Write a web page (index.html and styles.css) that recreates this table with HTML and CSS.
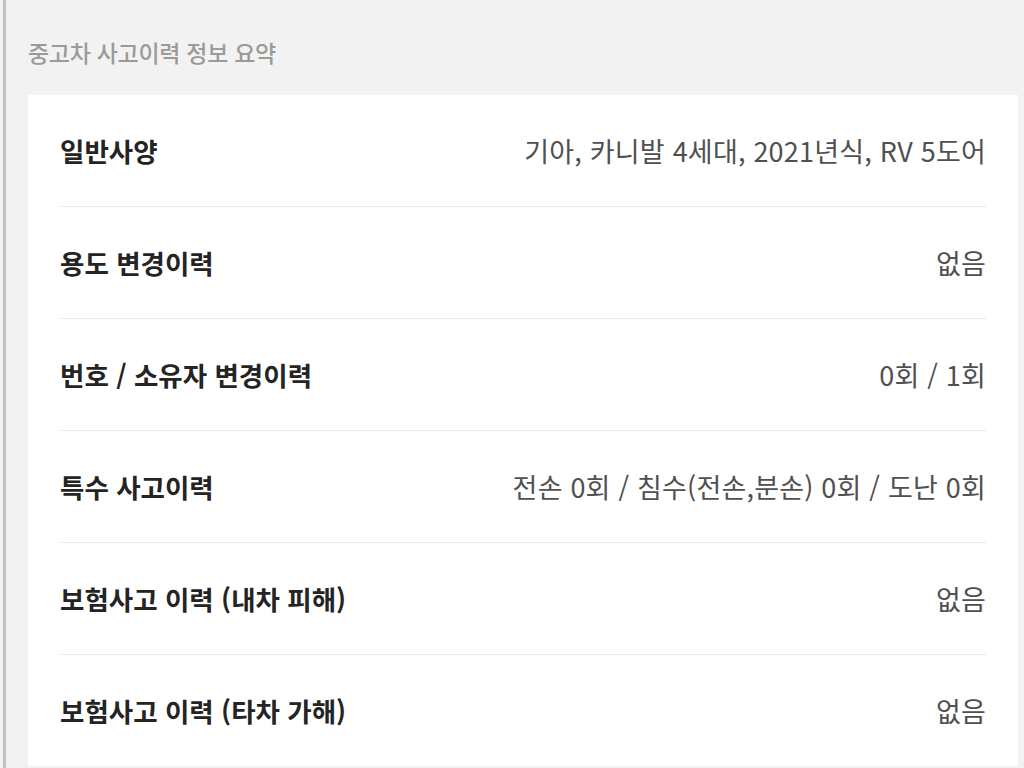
FILE: index.html
```html
<!DOCTYPE html>
<html lang="ko">
<head>
<meta charset="utf-8">
<title>중고차 사고이력 정보 요약</title>
<link rel="stylesheet" href="styles.css">
</head>
<body>
<div class="page">
  <section class="summary">
    <h2 class="summary-title">중고차 사고이력 정보 요약</h2>
    <div class="card">
      <div class="row"><span class="label">일반사양</span><span class="value">기아, 카니발 4세대, 2021년식, RV 5도어</span></div>
      <div class="row"><span class="label">용도 변경이력</span><span class="value">없음</span></div>
      <div class="row"><span class="label">번호 / 소유자 변경이력</span><span class="value">0회 / 1회</span></div>
      <div class="row"><span class="label">특수 사고이력</span><span class="value">전손 0회 / 침수(전손,분손) 0회 / 도난 0회</span></div>
      <div class="row"><span class="label">보험사고 이력 (내차 피해)</span><span class="value">없음</span></div>
      <div class="row"><span class="label">보험사고 이력 (타차 가해)</span><span class="value">없음</span></div>
    </div>
  </section>
</div>
</body>
</html>
```
FILE: styles.css
```css
html, body {
  margin: 0;
  padding: 0;
  background: #f2f2f2;
  height: 100%;
  overflow: hidden;
}
body {
  font-family: "Noto Sans CJK KR", "Noto Sans", sans-serif;
}
.page {
  margin-left: 3px;
  border-left: 3px solid #c2c2c2;
  min-height: 100%;
  padding: 0 6px 0 22px;
  box-sizing: border-box;
}
.summary {
  padding-top: 32px;
}
.summary-title {
  margin: 0;
  font-size: 23px;
  font-weight: 500;
  color: #9a9a9a;
  line-height: 40px;
  letter-spacing: -0.3px;
}
.card {
  margin-top: 23px;
  background: #ffffff;
  padding: 0 32px;
}
.row {
  display: flex;
  justify-content: space-between;
  align-items: center;
  height: 111px;
  border-bottom: 1px solid #ebebeb;
}
.row:last-child {
  border-bottom: none;
}
.label {
  font-size: 26.5px;
  font-weight: 700;
  color: #242424;
}
.value {
  font-size: 27px;
  font-weight: 400;
  color: #505050;
  letter-spacing: 0.2px;
}
```
